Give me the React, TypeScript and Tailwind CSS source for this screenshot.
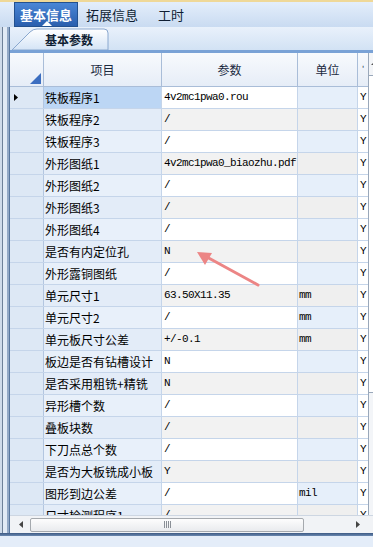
import React from "react";

type Row = { item: string; val: string; unit: string };

const rows: Row[] = [
  { item: "铁板程序1", val: "4v2mc1pwa0.rou", unit: "" },
  { item: "铁板程序2", val: "/", unit: "" },
  { item: "铁板程序3", val: "/", unit: "" },
  { item: "外形图纸1", val: "4v2mc1pwa0_biaozhu.pdf", unit: "" },
  { item: "外形图纸2", val: "/", unit: "" },
  { item: "外形图纸3", val: "/", unit: "" },
  { item: "外形图纸4", val: "/", unit: "" },
  { item: "是否有内定位孔", val: "N", unit: "" },
  { item: "外形露铜图纸", val: "/", unit: "" },
  { item: "单元尺寸1", val: "63.50X11.35", unit: "mm" },
  { item: "单元尺寸2", val: "/", unit: "mm" },
  { item: "单元板尺寸公差", val: "+/-0.1", unit: "mm" },
  { item: "板边是否有钻槽设计", val: "N", unit: "" },
  { item: "是否采用粗铣+精铣", val: "N", unit: "" },
  { item: "异形槽个数", val: "/", unit: "" },
  { item: "叠板块数", val: "/", unit: "" },
  { item: "下刀点总个数", val: "/", unit: "" },
  { item: "是否为大板铣成小板", val: "Y", unit: "" },
  { item: "图形到边公差", val: "/", unit: "mil" },
  { item: "尺寸检测程序1", val: "/", unit: "" },
];

const cjk = { fontFamily: '"Noto Sans CJK SC", "Noto Sans", sans-serif' };
const mono = {
  fontFamily: '"Liberation Mono", "Noto Sans CJK SC", monospace',
  fontSize: "11px",
  letterSpacing: "-0.6px",
};

function LeftStrip() {
  return (
    <div className="w-[10px] h-full flex shrink-0 relative">
      <div className="w-[2px] bg-[#cfdbea]" />
      <div className="w-[1px] bg-[#6d8098]" />
      <div className="w-[4px] bg-[#e1eaf5]" />
      <div className="w-[2px] bg-[#93a9c6]" />
      <div className="w-[1px] bg-[#58779f]" />
    </div>
  );
}

export default function App() {
  return (
    <div
      className="w-[373px] h-[547px] relative overflow-hidden bg-[#dfe9f6] text-black"
      style={cjk}
    >
      {/* top tab bar */}
      <div className="h-[27px] flex items-end bg-gradient-to-b from-[#e4eefb] to-[#c9dbf1] border-t-2 border-[#efd898] relative">
        <div className="w-[14px]" />
        <div className="relative h-[25px] w-[64px] flex items-center justify-center bg-gradient-to-b from-[#4a86d6] to-[#2a5fae] text-white font-bold text-[13px] border border-[#23518f]">
          基本信息
          <div className="absolute bottom-0 left-[27px] w-0 h-0 border-l-[5px] border-r-[5px] border-b-[5px] border-l-transparent border-r-transparent border-b-white" />
        </div>
        <div className="h-[25px] flex items-center text-[13px] text-[#0f1e33] ml-[8px]">拓展信息</div>
        <div className="h-[25px] flex items-center text-[13px] text-[#0f1e33] ml-[20px]">工时</div>
      </div>

      {/* body */}
      <div className="flex h-[506px]">
        <LeftStrip />
        <div className="flex-1 flex flex-col min-w-0">
          {/* second tab bar */}
          <div className="h-[23px] relative bg-gradient-to-b from-[#e9f1fb] to-[#d2e2f4]">
            <svg className="absolute left-0 top-0" width="110" height="23" viewBox="0 0 110 23">
              <defs>
                <linearGradient id="tg" x1="0" y1="0" x2="0" y2="1">
                  <stop offset="0" stopColor="#ffffff" />
                  <stop offset="1" stopColor="#d4e4f6" />
                </linearGradient>
              </defs>
              <path
                d="M2 23 L20 5 Q23 2 27 2 L94 2 Q98 2 98 6 L98 23 Z"
                fill="url(#tg)"
                stroke="#8aa8cf"
                strokeWidth="1"
              />
            </svg>
            <div className="absolute left-[35px] top-[4px] text-[12px] font-bold text-[#0f1e33]">基本参数</div>
          </div>
          <div className="h-[3px] bg-[#7aa2d6] -ml-[1px]" />

          {/* grid + vscroll */}
          <div className="flex flex-1 min-h-0">
            <div className="flex-1 flex flex-col min-w-0 overflow-hidden bg-white">
              {/* header */}
              <div className="h-[34px] flex shrink-0 bg-gradient-to-b from-[#f8fafd] to-[#e6edf7] border-b border-[#a9bdd8] text-[12px] text-[#1b2a3f]">
                <div className="w-[34px] border-r border-[#a9bdd8] relative">
                  <svg className="absolute right-[2px] bottom-[2px]" width="11" height="11" viewBox="0 0 11 11">
                    <path d="M11 0 L11 11 L0 11 Z" fill="#3c6ec0" />
                  </svg>
                </div>
                <div className="w-[118px] border-r border-[#a9bdd8] flex items-center justify-center">项目</div>
                <div className="w-[136px] border-r border-[#a9bdd8] flex items-center justify-center">参数</div>
                <div className="w-[60px] border-r border-[#a9bdd8] flex items-center justify-center">单位</div>
                <div className="w-[10px] flex items-start justify-center pt-[10px] text-[8px]">'</div>
              </div>
              {/* rows */}
              <div className="flex-1 min-h-0 overflow-hidden">
                {rows.map((r, i) => {
                  const even = i % 2 === 1;
                  return (
                    <div key={i} className="h-[22px] flex border-b border-[#c5d5ea] text-[12px]">
                      <div className="w-[34px] shrink-0 bg-[#dde8f5] border-r border-[#b3c6e0] flex items-center pl-[4px]">
                        {i === 0 && (
                          <svg width="4" height="7" viewBox="0 0 4 7">
                            <path d="M0 0 L4 3.5 L0 7 Z" fill="#000" />
                          </svg>
                        )}
                      </div>
                      <div
                        className={`w-[118px] shrink-0 border-r border-[#c5d5ea] flex items-center pl-[1px] whitespace-nowrap overflow-hidden ${
                          i === 0 ? "bg-[#bcd6f4]" : even ? "bg-[#e3ecf8]" : "bg-[#e8f0fa]"
                        }`}
                      >
                        {r.item}
                      </div>
                      <div
                        className={`w-[136px] shrink-0 border-r border-[#c5d5ea] flex items-center pl-[2px] whitespace-nowrap overflow-hidden ${
                          even ? "bg-[#f2f2f2]" : "bg-white"
                        }`}
                        style={mono}
                      >
                        {r.val}
                      </div>
                      <div
                        className={`w-[60px] shrink-0 border-r border-[#c5d5ea] flex items-center pl-[1px] ${
                          even ? "bg-[#efefef]" : "bg-[#e6effa]"
                        }`}
                        style={mono}
                      >
                        {r.unit}
                      </div>
                      <div className="w-[10px] shrink-0 bg-white flex items-center pl-[2px]" style={mono}>
                        Y
                      </div>
                    </div>
                  );
                })}
              </div>
            </div>
            {/* vertical scrollbar */}
            <div className="w-[5px] shrink-0 bg-[#f3f5f8] border-l border-[#9aa8ba] flex flex-col relative">
              <div className="h-[22px] relative">
                <div className="absolute left-[2px] top-[9px] w-0 h-0 border-l-[3px] border-r-[3px] border-b-[3px] border-l-transparent border-r-transparent border-b-[#555]" />
              </div>
              <div className="h-[318px] bg-white border-t border-b border-[#9aa8ba]" />
            </div>
          </div>

          {/* horizontal scrollbar */}
          <div className="h-[18px] shrink-0 flex items-center bg-[#f1f3f6] border-t border-[#cdd6e2] relative">
            <svg className="ml-[9px]" width="4" height="7" viewBox="0 0 4 7">
              <path d="M4 0 L0 3.5 L4 7 Z" fill="#444" />
            </svg>
            <div className="ml-[7px] w-[274px] h-[14px] rounded-[2px] border border-[#a5a9ae] bg-gradient-to-b from-[#fdfdfd] to-[#e9ebee] flex items-center justify-center">
              <div className="flex gap-[1px] h-[7px]">
                <div className="w-[1px] bg-[#8a8f96]" />
                <div className="w-[1px] bg-[#8a8f96]" />
                <div className="w-[1px] bg-[#8a8f96]" />
                <div className="w-[1px] bg-[#8a8f96]" />
              </div>
            </div>
            <svg className="ml-[52px]" width="4" height="7" viewBox="0 0 4 7">
              <path d="M0 0 L4 3.5 L0 7 Z" fill="#444" />
            </svg>
          </div>
        </div>
      </div>

      {/* bottom */}
      <div className="h-[3px] bg-gradient-to-b from-[#3d5a84] to-[#6a88b0]" />
      <div className="h-[11px] bg-[#e4edf9]" />

      {/* red arrow */}
      <svg className="absolute left-0 top-0 pointer-events-none" width="373" height="547" viewBox="0 0 373 547">
        <line x1="258" y1="285" x2="205" y2="256" stroke="#ec8585" strokeWidth="3" strokeLinecap="round" />
        <polygon points="197,252 212,253 205,265" fill="#ec8585" />
      </svg>
    </div>
  );
}
